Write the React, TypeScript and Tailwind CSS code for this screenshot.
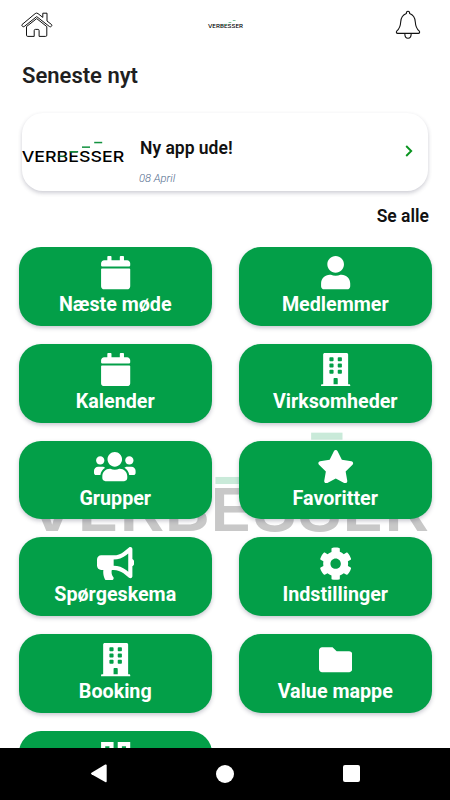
import React from 'react';
import type { IconType } from 'react-icons';
import {
  FaBuilding,
  FaBullhorn,
  FaCalendar,
  FaCog,
  FaFolder,
  FaQrcode,
  FaStar,
  FaUser,
  FaUsers,
} from 'react-icons/fa';

interface Tile {
  label: string;
  icon: IconType;
  // wide glyphs need more room than the default square
  iconClass?: string;
}

const tiles: Tile[] = [
  { label: 'Næste møde', icon: FaCalendar },
  { label: 'Medlemmer', icon: FaUser },
  { label: 'Kalender', icon: FaCalendar },
  { label: 'Virksomheder', icon: FaBuilding },
  { label: 'Grupper', icon: FaUsers, iconClass: 'w-[41.6px]' },
  { label: 'Favoritter', icon: FaStar, iconClass: 'w-[37.5px]' },
  { label: 'Spørgeskema', icon: FaBullhorn, iconClass: 'w-[37.5px]' },
  { label: 'Indstillinger', icon: FaCog },
  { label: 'Booking', icon: FaBuilding },
  { label: 'Value mappe', icon: FaFolder },
];

interface LogoProps {
  className?: string;
  color?: string;
  barColor?: string;
  // top of the lowest bar, and the rise from one bar to the next
  base?: number;
  step?: number;
  barHeight?: number;
  weight?: number;
}

const Logo: React.FC<LogoProps> = ({
  className = '',
  color = '#000',
  barColor = '#12923f',
  base = 20.6,
  step = 4.6,
  barHeight = 1.5,
  weight = 500,
}) => (
  <svg viewBox="0 0 102 28" className={className} overflow="visible">
    <text
      x="-0.3"
      y="27"
      fontFamily="Inter, sans-serif"
      fontSize="15.2"
      fontWeight={weight}
      textLength="102.6"
      lengthAdjust="spacingAndGlyphs"
      fill={color}
    >
      VERBESSER
    </text>
    {[0, 1, 2, 3].map((i) => (
      <rect
        key={i}
        x={35.6 + i * 12.2}
        y={base - i * step}
        width="8"
        height={barHeight}
        fill={barColor}
        opacity={i === 0 ? 0.6 : 1}
      />
    ))}
  </svg>
);

const HomeIcon = () => (
  <svg width="32" height="26" viewBox="0 0 32 26" fill="none" stroke="#111" strokeWidth="1" strokeLinejoin="round">
    <path d="M1 12.6 14.2 1.6Q15.6.5 17 1.6L21.8 5.4V1.2H26V9L30.6 12.6Q31.2 13.4 30.4 14.3 29.4 15.3 28.4 14.5L15.7 4.6 3.2 14.5Q2.2 15.2 1.3 14.2.5 13.4 1 12.6Z" />
    <path d="M5.5 14.6V23.2Q5.5 24.4 6.7 24.4H13.2V18.6Q13.2 17.4 14.4 17.4H16.9Q18.1 17.4 18.1 18.6V24.4H24.6Q25.8 24.4 25.8 23.2V14.6L15.7 6.6Z" />
  </svg>
);

const BellIcon = () => (
  <svg width="26" height="30" viewBox="0 0 26 30" fill="none" stroke="#111" strokeWidth="1.1" strokeLinejoin="round">
    <path d="M11.4 3.6C11.2 2.2 11.9 1.3 13 1.3s1.8.9 1.6 2.3C18 4.8 20 7.500 20.300 12c.3 4.800 1 6.500 3.800 8.800 1.100 1.200.4 2.600-.7 2.600H2.600c-1.100 0-1.800-1.400-.7-2.600C4.700 18.500 5.400 16.800 5.700 12 6 7.500 8 4.800 11.400 3.600Z" />
    <path d="M9.800 23.500C9.800 27.500 11.500 28.300 13 28.300s3.200-.8 3.200-4.800" />
  </svg>
);

const Header = () => (
  <header className="flex h-[50px] shrink-0 items-center justify-between pr-[29px] pl-[21px]">
    <HomeIcon />
    <Logo className="mt-[-2px] mr-[-2px] w-[35px]" barColor="#5db583" barHeight={2.4} base={20} step={5.6} />
    <BellIcon />
  </header>
);

const NewsCard = () => (
  <div className="mx-[22px] mt-[24px] flex h-[78px] shrink-0 items-center rounded-[21px] bg-white shadow-[0_2px_4px_rgba(40,40,70,0.24)]">
    <Logo className="mt-[-6px] w-[102px]" />
    <div className="ml-4 flex flex-1 flex-col pt-[18px]">
      <span className="text-[17.5px] leading-5 font-semibold text-[#111]">Ny app ude!</span>
      <span className="-ml-px mt-[15px] text-[11.2px] leading-3 font-light text-[#4f6a8c] italic">08 April</span>
    </div>
    <svg width="8" height="12" viewBox="0 0 8 12" fill="none" stroke="#0a9420" strokeWidth="1.9" className="mt-[-3px] mr-[15px]">
      <path d="M1.2 1 6.2 6l-5 5" />
    </svg>
  </div>
);

const MenuTile: React.FC<Tile> = ({ label, icon: Icon, iconClass = 'w-[33.3px]' }) => (
  <button className="flex h-[78.6px] flex-col items-center rounded-[22px] bg-[#039f48] pt-[9.2px] text-white shadow-[0_2px_4px_rgba(40,40,70,0.26)]">
    <Icon className={`h-[33.3px] ${iconClass}`} />
    <span className="mt-[3.6px] text-[19.7px] leading-6 font-bold">{label}</span>
  </button>
);

const NavigationBar = () => (
  <nav className="flex h-[52.5px] shrink-0 items-center justify-between bg-black px-[90px]">
    <svg width="17" height="19" viewBox="0 0 17 19" fill="#fff">
      <path d="M15.2.6Q16.7 0 16.7 1.5v15.8q0 1.5-1.5.8L1.5 10.3q-1.2-.8 0-1.6Z" />
    </svg>
    <span className="size-[18px] rounded-full bg-white" />
    <span className="size-[17px] rounded-[2px] bg-white" />
  </nav>
);

export default function App() {
  return (
    <div className="flex h-[800px] w-[450px] flex-col overflow-hidden bg-white font-['Roboto',sans-serif]">
      <Header />
      <h1 className="mt-[12px] ml-[22px] shrink-0 text-[22px] leading-[27px] font-semibold text-[#1f1f1f]">Seneste nyt</h1>
      <NewsCard />
      <a className="mt-[15px] mr-[21px] shrink-0 self-end text-[17.5px] leading-5 font-semibold text-[#111]">Se alle</a>

      <main className="relative mt-[21.3px] min-h-0 flex-1 overflow-hidden">
        {/* Watermark behind the tiles */}
        <Logo
          className="absolute top-[178px] left-[28px] w-[400px]"
          color="#c8c8c8"
          barColor="#c9ead9"
          base={18.9}
          step={5.65}
          barHeight={1.8}
          weight={600}
        />
        <div className="relative grid grid-cols-2 gap-x-[26.5px] gap-y-[18.1px] pr-[18px] pl-[18.5px]">
          {tiles.map((tile) => (
            <MenuTile key={tile.label} {...tile} />
          ))}
          {/* Last row is scrolled below the navigation bar */}
          <button className="flex h-[78.6px] flex-col items-center rounded-[22px] bg-[#039f48] pt-[9.2px] text-white">
            <FaQrcode className="h-[33.3px] w-[33.3px]" />
          </button>
        </div>
      </main>

      <NavigationBar />
    </div>
  );
}
